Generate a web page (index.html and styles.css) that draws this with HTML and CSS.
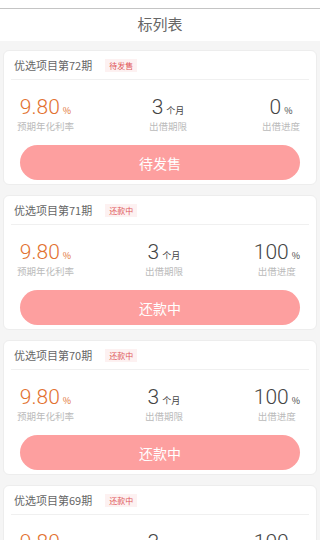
FILE: index.html
```html
<html>
<head>
  <meta charset="UTF-8" />
  <title>标列表</title>
  <link rel="stylesheet" href="styles.css">
</head>
<body>

  <div class="topbar"></div>
  <div class="header">标列表</div>

  <div class="list">

    <div class="card">
      <div class="card-head">
        <span class="name">优选项目第72期</span>
        <span class="tag">待发售</span>
      </div>
      <div class="stats">
        <div class="stat">
          <div class="val rate">9.80<small>%</small></div>
          <div class="label">预期年化利率</div>
        </div>
        <div class="stat">
          <div class="val">3<small>个月</small></div>
          <div class="label">出借期限</div>
        </div>
        <div class="stat">
          <div class="val">0<small>%</small></div>
          <div class="label">出借进度</div>
        </div>
      </div>
      <button class="btn">待发售</button>
    </div>

    <div class="card">
      <div class="card-head">
        <span class="name">优选项目第71期</span>
        <span class="tag">还款中</span>
      </div>
      <div class="stats">
        <div class="stat">
          <div class="val rate">9.80<small>%</small></div>
          <div class="label">预期年化利率</div>
        </div>
        <div class="stat">
          <div class="val">3<small>个月</small></div>
          <div class="label">出借期限</div>
        </div>
        <div class="stat">
          <div class="val">100<small>%</small></div>
          <div class="label">出借进度</div>
        </div>
      </div>
      <button class="btn">还款中</button>
    </div>

    <div class="card">
      <div class="card-head">
        <span class="name">优选项目第70期</span>
        <span class="tag">还款中</span>
      </div>
      <div class="stats">
        <div class="stat">
          <div class="val rate">9.80<small>%</small></div>
          <div class="label">预期年化利率</div>
        </div>
        <div class="stat">
          <div class="val">3<small>个月</small></div>
          <div class="label">出借期限</div>
        </div>
        <div class="stat">
          <div class="val">100<small>%</small></div>
          <div class="label">出借进度</div>
        </div>
      </div>
      <button class="btn">还款中</button>
    </div>

    <div class="card">
      <div class="card-head">
        <span class="name">优选项目第69期</span>
        <span class="tag">还款中</span>
      </div>
      <div class="stats">
        <div class="stat">
          <div class="val rate">9.80<small>%</small></div>
          <div class="label">预期年化利率</div>
        </div>
        <div class="stat">
          <div class="val">3<small>个月</small></div>
          <div class="label">出借期限</div>
        </div>
        <div class="stat">
          <div class="val">100<small>%</small></div>
          <div class="label">出借进度</div>
        </div>
      </div>
      <button class="btn">还款中</button>
    </div>

  </div>

</body>
</html>
```

FILE: styles.css
```css
body {
  font-family: "Noto Sans CJK SC", "Noto Sans", sans-serif;
  background-color: #f5f5f5;
  margin: 0;
  height: 540px;
  overflow: hidden;
}
.topbar {
  height: 8px;
  background-color: #fff;
  border-bottom: 1px solid #c4c4c4;
}
.header {
  height: 32px;
  line-height: 30px;
  background-color: #fff;
  text-align: center;
  font-size: 15px;
  color: #666;
}
.list {
  padding: 9px 3px 0;
}
.card {
  background-color: white;
  border: 1px solid #ededed;
  border-radius: 6px;
  margin-bottom: 10px;
  padding-bottom: 4px;
}
.card-head {
  height: 28px;
  display: flex;
  align-items: center;
  margin: 0 7px;
  padding-left: 3px;
  border-bottom: 1px solid #f0f0f0;
}
.name {
  font-size: 11px;
  color: #666;
}
.tag {
  font-size: 8px;
  color: #e0585a;
  background-color: #fdf1f1;
  padding: 1px 4px;
  margin-left: 13px;
}
.stats {
  display: flex;
  justify-content: space-between;
  padding: 15px 16px 0 13px;
}
.stat {
  text-align: center;
}
.val {
  height: 24px;
  font-family: Roboto, "Noto Sans", sans-serif;
  font-weight: 300;
  font-size: 21px;
  line-height: 24px;
  color: #444;
}
.val small {
  font-family: "Noto Sans CJK SC", sans-serif;
  font-weight: 400;
  font-size: 9px;
  line-height: 10px;
  margin-left: 3px;
}
.val.rate {
  color: #e2712f;
}
.label {
  font-size: 9.5px;
  line-height: 14px;
  color: #bbb;
}
.btn {
  display: block;
  width: 280px;
  height: 35px;
  margin: 12px auto 0;
  border: none;
  border-radius: 18px;
  background-color: #fd9f9f;
  color: white;
  font-family: inherit;
  font-size: 14px;
}
```
